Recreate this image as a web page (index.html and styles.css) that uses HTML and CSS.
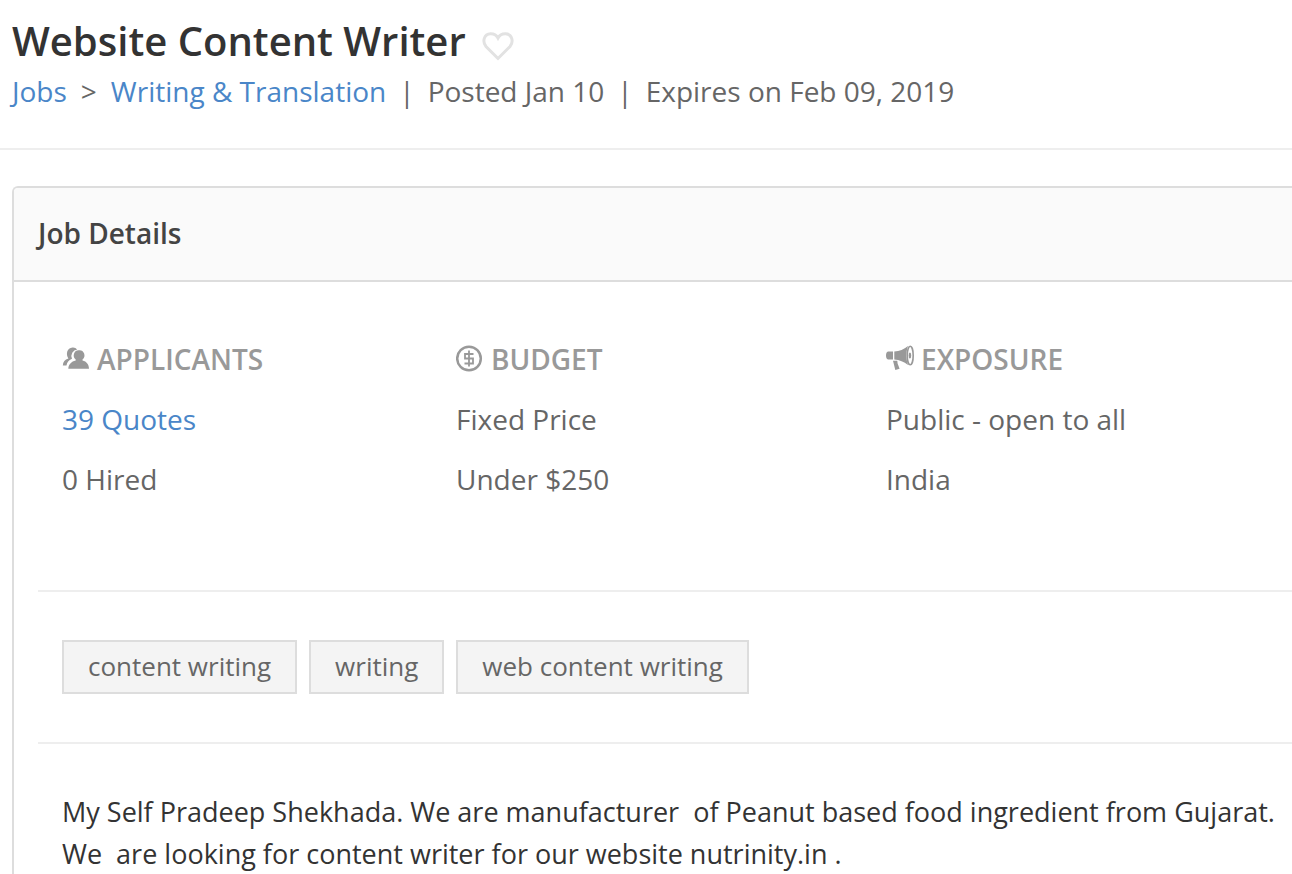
FILE: index.html
```html
<!DOCTYPE html>
<html lang="en">
<head>
<meta charset="utf-8">
<title>Website Content Writer</title>
<link rel="stylesheet" href="styles.css">
</head>
<body>
<header class="job-header">
  <div class="title-row">
    <h1 class="title">Website Content Writer</h1>
    <button class="favorite" type="button" aria-label="Save job">
      <svg class="heart" viewBox="0 0 32 30" aria-hidden="true"><path d="M16 27.500 L4 15.500 C0 10.500 2 3 8.500 2.800 C12.500 2.700 14.800 4.800 16 7 C17.200 4.800 19.500 2.700 23.500 2.800 C30 3 32 10.500 28 15.500 Z"/></svg>
    </button>
  </div>
  <nav class="meta" aria-label="Breadcrumb">
    <a href="#">Jobs</a><span class="arrow">&gt;</span><a href="#">Writing &amp; Translation</a><span class="bar">|</span><span>Posted Jan 10</span><span class="bar">|</span><span>Expires on Feb 09, 2019</span>
  </nav>
</header>
<main class="card">
  <h2 class="card-title">Job Details</h2>
  <div class="card-body">
    <section class="facts">
      <div class="fact">
        <h3 class="fact-title">
          <svg class="icon" viewBox="0 0 28 28" aria-hidden="true"><path d="M10.500 2.500a5.300 5.300 0 0 1 4.700 2A6.600 6.600 0 0 0 10 13.800C6.500 15.300 5 17.500 4.500 20.500H.8c.2-3.500 2-6 5.600-7C3.500 9 5 3 10.500 2.500z"/><path d="M17.200 5.200a5 5.200 0 0 1 3.300 9.300v1c4.200 1 6.400 4 6.500 8.300H6.300c.2-4.300 3-7.300 7.400-8.300v-1a5 5.200 0 0 1 3.500-9.300z"/></svg>
          <span>APPLICANTS</span>
        </h3>
        <p><a href="#">39 Quotes</a></p>
        <p>0 Hired</p>
      </div>
      <div class="fact">
        <h3 class="fact-title">
          <svg class="icon line" viewBox="0 0 28 28" aria-hidden="true"><circle cx="13" cy="13.500" r="11.800" stroke-width="2.500"/><path d="M17.500 9H9v4.500h8v5H8.500M13 5.500v16" stroke-width="1.800"/></svg>
          <span>BUDGET</span>
        </h3>
        <p>Fixed Price</p>
        <p>Under $250</p>
      </div>
      <div class="fact">
        <h3 class="fact-title">
          <svg class="icon" viewBox="0 0 28 28" aria-hidden="true"><path d="M2 6.500h5v8H2Q0 14 0 10.500T2 6.500zM8.300 6.500Q16 6 22 1Q18.700 10.500 22 20Q16 15 8.300 14.500zM7 15.700h4.300l.3 2.800 2 5.200-4.300 1.300z"/><ellipse cx="24.200" cy="10.500" rx="3" ry="9.300" fill="none" stroke="currentColor" stroke-width="1.600"/><ellipse cx="23.900" cy="10.500" rx="1.300" ry="3"/></svg>
          <span>EXPOSURE</span>
        </h3>
        <p>Public - open to all</p>
        <p>India</p>
      </div>
    </section>
    <section class="tags">
      <a class="tag" href="#">content writing</a>
      <a class="tag" href="#">writing</a>
      <a class="tag" href="#">web content writing</a>
    </section>
    <p class="description">My Self Pradeep Shekhada. We are manufacturer&nbsp; of Peanut based food ingredient from Gujarat.<br>We&nbsp; are looking for content writer for our website nutrinity.in .</p>
  </div>
</main>
</body>
</html>
```
FILE: styles.css
```css
* {
  box-sizing: border-box;
}

body {
  margin: 0;
  background: #fff;
  color: #666;
  font-family: "Open Sans", "Noto Sans", sans-serif;
  font-size: 28px;
  line-height: 40px;
  overflow: hidden;
}

h1, h2, h3, p {
  margin: 0;
}

a {
  color: #4a86c8;
  text-decoration: none;
}

.job-header {
  padding: 11px 12px 37px;
  border-bottom: 2px solid #eee;
}

.title-row {
  display: flex;
  align-items: center;
  gap: 16px;
}

.title {
  color: #333;
  font-size: 40px;
  line-height: 60px;
  font-weight: 600;
}

.favorite {
  display: flex;
  padding: 10px 0 0;
  border: 0;
  background: none;
}

.heart {
  width: 32px;
  height: 30px;
  fill: none;
  stroke: #e2e2e2;
  stroke-width: 3;
}

.meta {
  white-space: nowrap;
}

.arrow {
  margin: 0 14px;
}

.bar {
  margin: 0 13px;
}

.card {
  margin: 36px 0 0 12px;
  border: 2px solid #ddd;
  border-right: 0;
  border-radius: 6px 0 0 0;
}

.card-title {
  padding: 25px 24px 27px;
  border-bottom: 2px solid #ddd;
  border-radius: 4px 0 0 0;
  background: #fafafa;
  color: #444;
  font-size: 28px;
  font-weight: 600;
}

.card-body {
  padding: 47px 0 24px 24px;
}

.facts {
  display: grid;
  grid-template-columns: 394fr 430fr 406fr;
  padding: 0 0 81px 24px;
  border-bottom: 2px solid #eee;
  line-height: 60px;
}

.fact-title {
  display: flex;
  align-items: center;
  gap: 7px;
  color: #999;
  font-size: 28px;
  font-weight: 600;
}

.icon {
  width: 28px;
  height: 28px;
  fill: currentColor;
}

.line {
  fill: none;
  stroke: currentColor;
}

.tags {
  display: flex;
  gap: 12px;
  padding: 48px 24px;
  border-bottom: 2px solid #eee;
}

.tag {
  padding: 4px 24px 6px;
  border: 2px solid #ddd;
  background: #f4f4f4;
  color: #666;
  font-size: 26px;
}

.description {
  padding: 47px 0 0 24px;
  color: #333;
  font-size: 27px;
  line-height: 42px;
  white-space: nowrap;
}
```
